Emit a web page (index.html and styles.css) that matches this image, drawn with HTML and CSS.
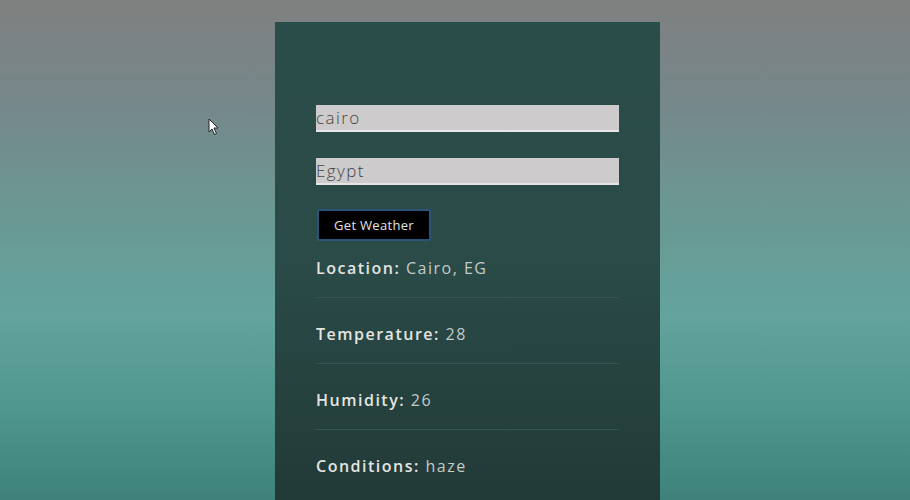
FILE: index.html
```html
<!DOCTYPE html>
<html>
<head>
<meta charset="utf-8">
<link rel="stylesheet" href="styles.css">
</head>
<body>
<svg class="cursor" width="12" height="18" viewBox="0 0 12 18"><path d="M1 1 L1 14 L4 11 L6.5 16.5 L8.5 15.5 L6 10 L10 10 Z" fill="#fff" stroke="#222" stroke-width="1"/></svg>
<div class="panel">
  <form class="form">
    <input class="field" type="text" value="cairo">
    <input class="field" type="text" value="Egypt">
    <button class="btn" type="button">Get Weather</button>
  </form>
  <div class="results">
    <div class="row"><span class="label">Location:</span> <span class="value">Cairo, EG</span></div>
    <div class="row"><span class="label">Temperature:</span> <span class="value">28</span></div>
    <div class="row"><span class="label">Humidity:</span> <span class="value">26</span></div>
    <div class="row last"><span class="label">Conditions:</span> <span class="value">haze</span></div>
  </div>
</div>
</body>
</html>
```
FILE: styles.css
```css
html, body {
  margin: 0;
  height: 500px;
  overflow: hidden;
}
body {
  position: relative;
  background: linear-gradient(180deg, #808080 0%, #76878a 20%, #6c9692 40%, #63a49d 63%, #4f968d 82%, #3e8279 100%);
  font-family: "Open Sans", "Liberation Sans", sans-serif;
}
.cursor {
  position: absolute;
  left: 208px;
  top: 118px;
}
.panel {
  width: 385px;
  height: 478px;
  margin: 22px 0 0 275px;
  padding: 83px 0 0 41px;
  box-sizing: border-box;
  background: linear-gradient(180deg, #2b4d4a 0%, #2a4b48 50%, #223a37 100%);
}
.form {
  display: flex;
  flex-direction: column;
  align-items: flex-start;
}
.field {
  width: 303px;
  height: 27px;
  box-sizing: border-box;
  margin: 0 0 26px 0;
  padding: 0;
  border: none;
  border-bottom: 2px solid #e6e6e6;
  background: #cdcbcb;
  font-family: "Open Sans", sans-serif;
  font-weight: 300;
  font-size: 17px;
  letter-spacing: 1.4px;
  color: #454545;
  outline: none;
}
.field + .field {
  margin-bottom: 24px;
}
.btn {
  width: 114px;
  height: 32px;
  box-sizing: border-box;
  padding: 0;
  margin: 0 0 0 1px;
  background: #000;
  border: 2px solid #2b5578;
  border-radius: 2px;
  color: #e2e2e2;
  font-family: "Open Sans", sans-serif;
  font-size: 13px;
  letter-spacing: 0.3px;
}
.results {
  margin-top: 15px;
  width: 303px;
}
.row {
  line-height: 24px;
  padding: 0 0 17px 0;
  margin-bottom: 24px;
  border-bottom: 1px solid #36554f;
  font-size: 16px;
  letter-spacing: 1.5px;
}
.row.last {
  border-bottom: none;
}
.label {
  font-weight: 600;
  color: #e4e4e0;
}
.value {
  color: #c2cbc7;
}
```
